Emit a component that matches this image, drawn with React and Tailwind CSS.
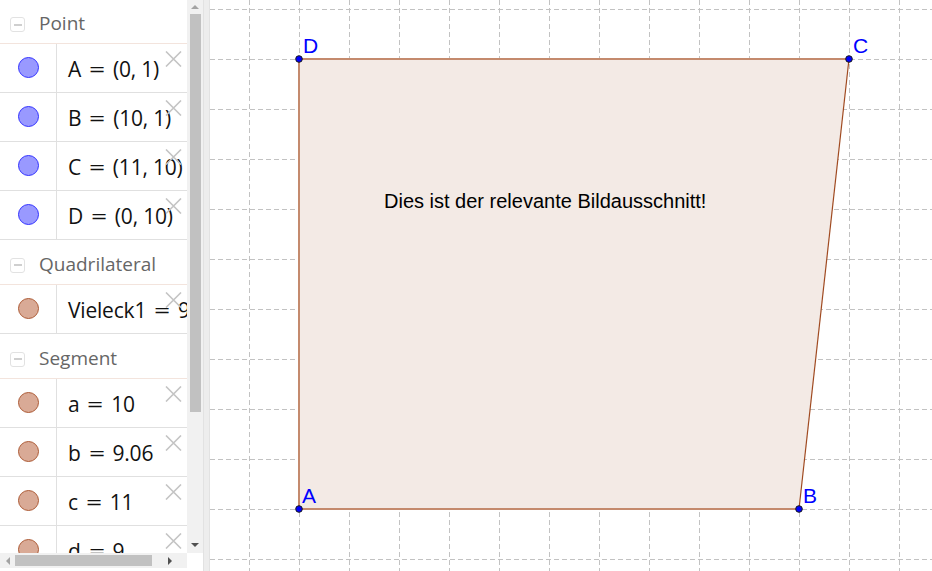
import React from "react";

const sans = { fontFamily: '"Open Sans", "Liberation Sans", sans-serif' };
const arial = { fontFamily: '"Liberation Sans", Arial, sans-serif' };

const sections = [
  {
    title: "Point",
    h: "h-[44px]",
    kind: "point",
    items: [
      ["A", "(0, 1)"],
      ["B", "(10, 1)"],
      ["C", "(11, 10)"],
      ["D", "(0, 10)"],
    ],
  },
  {
    title: "Quadrilateral",
    h: "h-[45px]",
    kind: "shape",
    items: [["Vieleck1", "9"]],
  },
  {
    title: "Segment",
    h: "h-[45px]",
    kind: "shape",
    items: [
      ["a", "10"],
      ["b", "9.06"],
      ["c", "11"],
      ["d", "9"],
    ],
  },
];

function Header({ title, h }) {
  return (
    <div className={`${h} flex items-center border-b border-[#f3e4dd] pl-[10px] pt-[6px]`}>
      <div className="w-[15px] h-[15px] rounded-[3px] border border-[#e2e2e2] flex items-center justify-center">
        <div className="w-[8px] h-[2px] bg-[#cfcfcf]" />
      </div>
      <span className="ml-[14px] text-[19px] text-[#666666] leading-none pb-[2px]">{title}</span>
    </div>
  );
}

function Row({ name, value, kind }) {
  const dot =
    kind === "point"
      ? "bg-[#9999ff] border-[#3333ff]"
      : "bg-[#d9aa96] border-[#ad5b36]";
  return (
    <div className="relative h-[49px] flex border-b border-[#e0e0e0]">
      <div className="w-[57px] shrink-0 border-r border-[#e0e0e0] flex justify-center pt-[13px] pl-[1px]">
        <div className={`w-[21px] h-[21px] rounded-full border ${dot}`} />
      </div>
      <div className="pl-[11px] pt-[11px] whitespace-nowrap text-[21px] leading-[28px] text-[#111111] tracking-[-0.2px]">
        {name}
        <span className="px-[10px] inline-block scale-x-[1.35]">=</span>
        {value}
      </div>
      <svg className="absolute left-[165px] top-[7px]" width="17" height="16" viewBox="0 0 17 16">
        <path d="M1 0.5 L16 15.5 M16 0.5 L1 15.5" stroke="#c4c4c4" strokeWidth="1.6" />
      </svg>
    </div>
  );
}

function Canvas() {
  const vx = Array.from({ length: 14 }, (_, i) => 39.5 + i * 50);
  const hy = Array.from({ length: 12 }, (_, i) => 9.5 + i * 50);
  return (
    <svg width="722" height="571" viewBox="0 0 722 571" className="block">
      {vx.map((x) => (
        <line key={"v" + x} x1={x} y1="0" x2={x} y2="571" stroke="#c2c2c2" strokeDasharray="5 3" />
      ))}
      {hy.map((y) => (
        <line key={"h" + y} x1="0" y1={y} x2="722" y2={y} stroke="#c2c2c2" strokeDasharray="5 3" />
      ))}
      <polygon points="89,509 589,509 639,59 89,59" fill="#f3eae5" stroke="none" />
      <polyline points="639,59 89,59 89,509 589,509" fill="none" stroke="#c48a6d" strokeWidth="2" />
      <line x1="589" y1="509" x2="639" y2="59" stroke="#a04a20" strokeWidth="1.2" />
      <text x="174" y="208" fontSize="20" fill="#000" style={arial}>
        Dies ist der relevante Bildausschnitt!
      </text>
      {[
        [89, 509, "A", 92, 503],
        [589, 509, "B", 593, 503],
        [639, 59, "C", 643, 53],
        [89, 59, "D", 93, 53],
      ].map(([x, y, l, lx, ly]) => (
        <g key={l}>
          <circle cx={x} cy={y} r="3.3" fill="#0000ff" stroke="#1a1a1a" strokeWidth="1" />
          <text x={lx} y={ly} fontSize="21" fill="#0000ff" style={arial}>
            {l}
          </text>
        </g>
      ))}
    </svg>
  );
}

export default function App() {
  return (
    <div className="w-[932px] h-[571px] flex overflow-hidden bg-white" style={sans}>
      <div className="w-[203px] shrink-0 flex flex-col">
        <div className="h-[553px] flex">
          <div className="w-[187px] overflow-hidden">
            {sections.map((s) => (
              <div key={s.title}>
                <Header title={s.title} h={s.h} />
                {s.items.map(([n, v]) => (
                  <Row key={n} name={n} value={v} kind={s.kind} />
                ))}
              </div>
            ))}
          </div>
          <div className="w-[16px] bg-[#f1f1f1] flex flex-col items-center relative">
            <div className="h-[14px] flex items-center justify-center">
              <div className="w-0 h-0 border-l-[4px] border-r-[4px] border-b-[4px] border-l-transparent border-r-transparent border-b-[#a3a3a3]" />
            </div>
            <div className="w-[11px] h-[398px] bg-[#c1c1c1]" />
            <div className="flex-1" />
            <div className="h-[16px] flex items-center justify-center">
              <div className="w-0 h-0 border-l-[4px] border-r-[4px] border-t-[4px] border-l-transparent border-r-transparent border-t-[#505050]" />
            </div>
          </div>
        </div>
        <div className="h-[15px] flex">
          <div className="w-[187px] bg-[#f1f1f1] flex items-center">
            <div className="w-[15px] flex items-center justify-center">
              <div className="w-0 h-0 border-t-[4px] border-b-[4px] border-r-[4px] border-t-transparent border-b-transparent border-r-[#a3a3a3]" />
            </div>
            <div className="w-[137px] h-[11px] bg-[#c1c1c1]" />
            <div className="flex-1 flex items-center justify-center">
              <div className="w-0 h-0 border-t-[4px] border-b-[4px] border-l-[4px] border-t-transparent border-b-transparent border-l-[#505050]" />
            </div>
          </div>
          <div className="flex-1 bg-white" />
        </div>
        <div className="flex-1 bg-white" />
      </div>
      <div className="w-[7px] shrink-0 bg-[#ededed] border-l border-r border-[#e2e2e2]" />
      <div className="flex-1 relative">
        <Canvas />
      </div>
    </div>
  );
}
